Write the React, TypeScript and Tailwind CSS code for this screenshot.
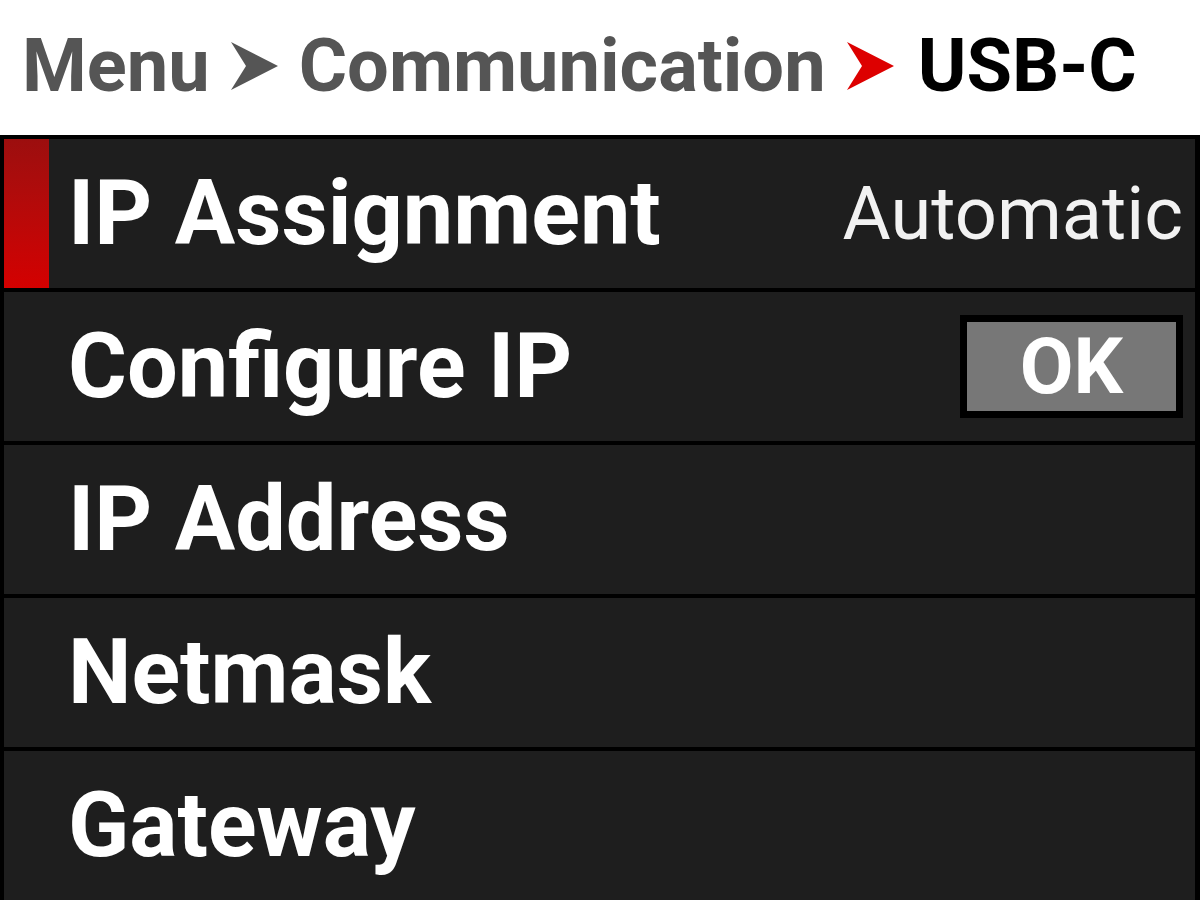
const Arrow = ({ className = '' }: { className?: string }) => (
    <svg width="47" height="48" viewBox="0 0 47 48" className={className}>
        <path d="M0 0 L47 24 L0 48 L15 24 Z" fill="currentColor" />
    </svg>
)

const rows = ['IP Assignment', 'Configure IP', 'IP Address', 'Netmask', 'Gateway']

export default function App() {
    return (
        <div className="w-[1200px] h-[900px] bg-black overflow-hidden font-['Roboto','Liberation_Sans',sans-serif]">
            <div className="h-[135px] bg-white flex items-center pl-[22px] pb-[4px] text-[74px] font-bold leading-none">
                <span className="text-[#555555]">Menu</span>
                <Arrow className="text-[#555555] ml-[21px] mr-[21px]" />
                <span className="text-[#555555]">Communication</span>
                <Arrow className="text-[#dd0000] ml-[21px] mr-[24px]" />
                <span className="text-black">USB-C</span>
            </div>
            <div className="flex flex-col gap-[4px] pt-[4px] pl-[4px] pr-[5px]">
                {rows.map((label, i) => (
                    <div key={label} className="h-[149px] bg-[#1e1e1e] flex items-center shrink-0">
                        {i === 0 ? (
                            <div className="w-[45px] h-full bg-gradient-to-b from-[#9c0e0e] to-[#d40000] mr-[19px]" />
                        ) : (
                            <div className="w-[64px]" />
                        )}
                        <span className="text-white text-[90px] font-bold leading-none">{label}</span>
                        <div className="flex-1" />
                        {i === 0 && (
                            <span className="text-[#f2f2f2] text-[74px] leading-none mr-[12px]">Automatic</span>
                        )}
                        {i === 1 && (
                            <div className="w-[223px] h-[103px] border-[7px] border-black bg-[#777777] mr-[12px] flex items-center justify-center">
                                <span className="text-white text-[78px] font-bold leading-none">OK</span>
                            </div>
                        )}
                    </div>
                ))}
            </div>
        </div>
    )
}
